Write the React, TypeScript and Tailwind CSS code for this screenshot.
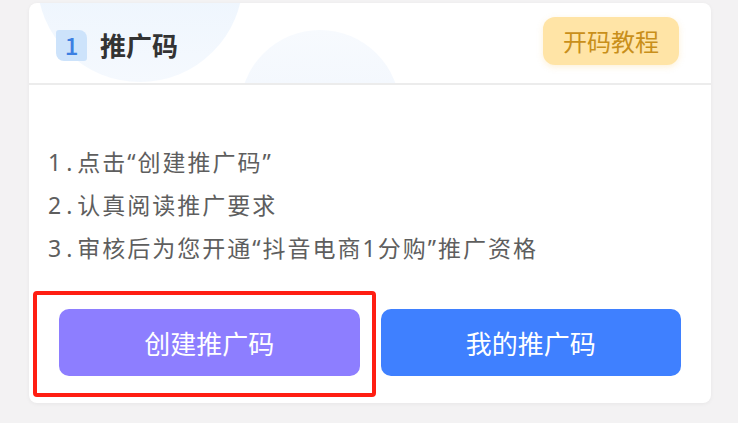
import React from 'react';

const steps = [
    ['1.', '点击“创建推广码”'],
    ['2.', '认真阅读推广要求'],
    ['3.', '审核后为您开通“抖音电商1分购”推广资格']
];

const font = { fontFamily: '"Noto Sans CJK SC", "Noto Sans", sans-serif' };
const listFont = { fontFamily: '"Noto Sans", "Noto Sans CJK SC", sans-serif' };

export default function App(): JSX.Element {
    return (
        <div
            className="w-[738px] h-[423px] bg-[#f3f2f3] pt-[3px] pl-[29px] overflow-hidden"
            style={font}
        >
            <div className="relative w-[682px] h-[400px] rounded-lg bg-white shadow-[0_1px_4px_rgba(0,0,0,0.05)] overflow-hidden flex flex-col">
                {/* header with soft decorative circles */}
                <div className="relative h-[82px] flex items-center justify-between pl-[27px] pr-[32px] border-b-2 border-[#ececec] overflow-hidden">
                    <div className="absolute left-[8px] top-[-127px] w-[206px] h-[206px] rounded-full bg-gradient-to-b from-[#e6f1fd] to-[#f5f9fe]" />
                    <div className="absolute left-[211px] top-[27px] w-[160px] h-[160px] rounded-full bg-gradient-to-b from-[#f7fafe] to-[#eef4fd]" />
                    <div className="relative flex items-center gap-[13px] mt-[4px]">
                        <div className="w-[31px] h-[31px] rounded-tl-[3px] rounded-tr-[8px] rounded-bl-[8px] rounded-br-[3px] bg-[#cde3fb] text-[#3b7fe2] text-[24px] font-medium flex items-center justify-center leading-none">
                            1
                        </div>
                        <span className="text-[26px] font-semibold text-[#333] leading-none">推广码</span>
                    </div>
                    <button className="relative h-[48px] mb-[4px] px-[20px] rounded-[12px] bg-[#ffe4a6] text-[#c98f1a] text-[24px] leading-none shadow-[0_2px_6px_rgba(250,200,100,0.25)]">
                        开码教程
                    </button>
                </div>

                {/* steps */}
                <div className="pt-[56px] pl-[19px] flex flex-col" style={listFont}>
                    {steps.map(([n, s]) => (
                        <p key={n} className="h-[43px] leading-[43px] text-[23px] text-[#5e5e5e] tracking-[2px]">
                            <span className="tracking-[5px]">{n}</span>
                            {s}
                        </p>
                    ))}
                </div>

                {/* actions */}
                <div className="relative mt-[39px] px-[30px] flex gap-[21px]">
                    <button className="flex-1 h-[67px] rounded-[10px] bg-[#8d7eff] text-white text-[26px]">
                        创建推广码
                    </button>
                    <button className="flex-1 h-[67px] rounded-[10px] bg-[#3f80ff] text-white text-[26px]">
                        我的推广码
                    </button>
                    {/* red highlight annotation */}
                    <div className="absolute left-[4px] top-[-18px] w-[343px] h-[106px] border-4 border-[#ff1e12] rounded-[4px] pointer-events-none" />
                </div>
            </div>
        </div>
    );
}
